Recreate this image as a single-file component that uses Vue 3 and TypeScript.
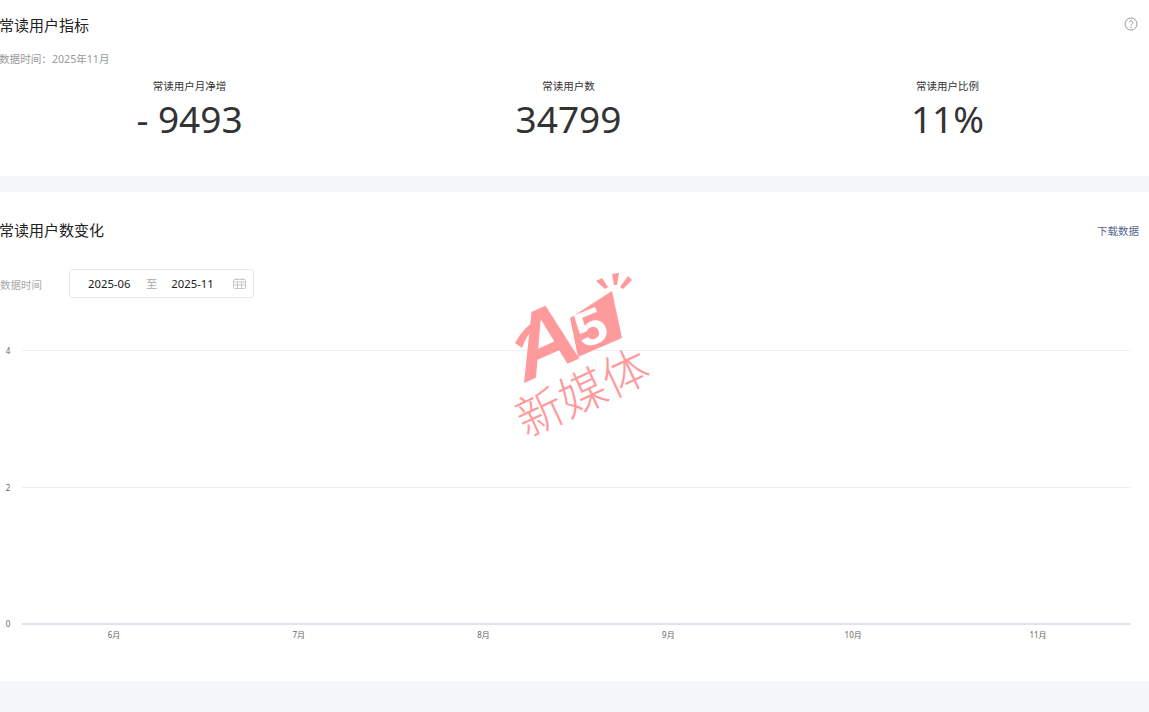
<template>
  <div class="page">
    <section class="panel panel-top">
      <div class="head">
        <h2 class="title">常读用户指标</h2>
        <svg class="help" width="14" height="14" viewBox="0 0 14 14" fill="none">
          <circle cx="7" cy="7" r="6" stroke="#999" stroke-width="1" />
          <path d="M5.2 5.5a1.8 1.8 0 1 1 2.7 1.6c-.6.35-.9.7-.9 1.4" stroke="#999" stroke-width="1" />
          <circle cx="7" cy="10.2" r=".7" fill="#999" />
        </svg>
      </div>
      <p class="data-time">数据时间：2025年11月</p>
      <div class="metrics">
        <div v-for="m in metrics" :key="m.label" class="metric">
          <div class="metric-label">{{ m.label }}</div>
          <div class="metric-value">{{ m.value }}</div>
        </div>
      </div>
    </section>

    <section class="panel panel-chart">
      <div class="head head-chart">
        <h2 class="title">常读用户数变化</h2>
        <a class="download">下载数据</a>
      </div>
      <div class="filter">
        <span class="filter-label">数据时间</span>
        <div class="range">
          <span class="range-date">2025-06</span>
          <span class="range-sep">至</span>
          <span class="range-date">2025-11</span>
          <svg class="calendar" width="13" height="11" viewBox="0 0 13 11" fill="none" stroke="#c4c7cc">
            <rect x=".5" y="1.5" width="12" height="9" rx="1" />
            <path d="M.5 4h12M.5 7h12M4.5 4v6.5M8.5 4v6.5M3.5 0v2M9.5 0v2" />
          </svg>
        </div>
      </div>
      <svg class="chart" width="1149" height="350" viewBox="0 0 1149 350">
        <g v-for="t in ticks" :key="t.label">
          <line x1="22" x2="1131" :y1="t.y" :y2="t.y" :stroke="t.label === '0' ? '#e0e3ee' : '#eeeff2'" :stroke-width="t.label === '0' ? 2 : 1" />
          <text x="8" :y="t.y + 3" class="axis" text-anchor="middle">{{ t.label }}</text>
        </g>
        <text v-for="m in months" :key="m.label" :x="m.x" y="340" class="axis" text-anchor="middle">{{ m.label }}</text>
      </svg>
    </section>

    <svg class="watermark" width="190" height="190" viewBox="0 0 190 190">
      <g fill="#ff9a9c">
        <path d="M25 83C33 68 44 59 58 56C47 62 38 72 32 88Z" />
        <path d="M106 21L112 18L118 27L115 29ZM122 14L129 13L127 25L124 25ZM138 16L142 20L133 29L130 27Z" />
        <text class="wm-a" transform="translate(32 124) rotate(-24) skewX(-12)">A</text>
        <polygon points="80,58 122,31 132,78 88,97" />
        <text class="wm-five" fill="#fff" transform="translate(93 89) rotate(-22) scale(1.1 1)">5</text>
        <text class="wm-name" transform="translate(36 178) rotate(-25)">新媒体</text>
      </g>
    </svg>
  </div>
</template>

<script setup lang="ts">
const metrics = [
  { label: '常读用户月净增', value: '- 9493' },
  { label: '常读用户数', value: '34799' },
  { label: '常读用户比例', value: '11%' },
]

const ticks = [
  { label: '4', y: 52.5 },
  { label: '2', y: 189.5 },
  { label: '0', y: 326 },
]

const months = ['6月', '7月', '8月', '9月', '10月', '11月'].map((label, i) => ({
  label,
  x: 114 + i * 184.8,
}))
</script>

<style>
html,
body {
  margin: 0;
  background: #f5f6f8;
}
</style>

<style scoped>
.page {
  position: relative;
  width: 1149px;
  height: 712px;
  overflow: hidden;
  background: #f5f6f8;
  font-family: "Noto Sans", "Noto Sans CJK SC", sans-serif;
  color: #333;
}

.panel {
  background: #fff;
}

.panel-top {
  height: 176px;
  margin-bottom: 16px;
  padding-top: 14px;
  box-sizing: border-box;
}

.panel-chart {
  height: 489px;
  padding-top: 27px;
  box-sizing: border-box;
}

.head {
  display: flex;
  justify-content: space-between;
  align-items: center;
  padding-right: 11px;
}

.head-chart {
  padding-right: 10px;
}

.title {
  margin: 0 0 0 -1px;
  font-size: 15px;
  font-weight: 400;
  line-height: 22px;
  color: #222;
}

.help {
  margin-top: -2px;
}

.download {
  font-size: 10.5px;
  color: #56688f;
}

.data-time {
  margin: 15px 0 0 -1px;
  font-size: 10.6px;
  line-height: 16px;
  color: #999;
}

.metrics {
  display: grid;
  grid-template-columns: repeat(3, 379px);
  margin-top: 11px;
}

.metric {
  text-align: center;
}

.metric-label {
  font-size: 10.5px;
  line-height: 16px;
  color: #333;
}

.metric-value {
  font-size: 37px;
  font-weight: 400;
  line-height: 50px;
  color: #333;
}

.filter {
  display: flex;
  align-items: center;
  margin-top: 28px;
}

.filter-label {
  width: 69px;
  margin-top: 2px;
  font-size: 10.5px;
  color: #aaa;
}

.range {
  display: flex;
  align-items: center;
  width: 185px;
  height: 29px;
  box-sizing: border-box;
  padding: 0 7px 0 18px;
  border: 1px solid #e8e9ec;
  border-radius: 3px;
  font-size: 11.3px;
}

.range-date {
  width: 43px;
  color: #222;
}

.range-sep {
  margin: -2px 14px 0 15px;
  color: #aaa;
}

.calendar {
  margin-left: auto;
}

.chart {
  display: block;
}

.axis {
  font-size: 8px;
  fill: #666;
}

.watermark {
  position: absolute;
  left: 490px;
  top: 260px;
}

.wm-a {
  font-family: "Liberation Sans", sans-serif;
  font-size: 90px;
  font-weight: 700;
}

.wm-five {
  font-family: "Liberation Sans", sans-serif;
  font-size: 50px;
  font-weight: 700;
}

.wm-name {
  font-family: "Noto Sans CJK SC", sans-serif;
  font-size: 47px;
  font-weight: 300;
}
</style>
